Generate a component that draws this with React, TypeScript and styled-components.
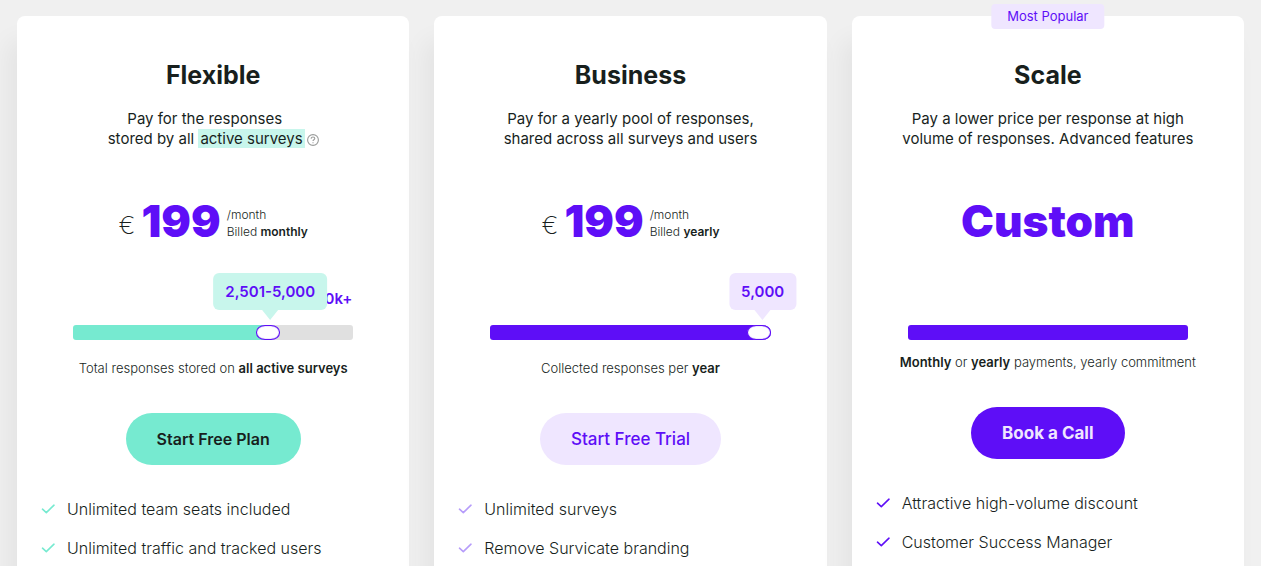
import React, { useId, useState } from "react";
import styled, { createGlobalStyle } from "styled-components";

const purple = "#5e0ef7";
const lilac = "#efe6ff";
const mint = "#76ead0";
const paleMint = "#c8f6ec";
const ink = "#181f1d";

const GlobalStyle = createGlobalStyle`
  *, *::before, *::after { box-sizing: border-box; }
  html { scrollbar-width: none; }
  body {
    margin: 0;
    background: #f0f0f0;
    color: ${ink};
    font-family: Inter, "Liberation Sans", sans-serif;
  }
`;

const Plans = styled.main`
  display: grid;
  grid-template-columns: repeat(3, minmax(0, 1fr));
  gap: 25px;
  padding: 16px 17px;
`;

const Card = styled.section`
  position: relative;
  display: flex;
  flex-direction: column;
  align-items: center;
  padding: 43px 24px 24px;
  border-radius: 8px;
  background: #fff;
  box-shadow: -10px 24px 24px rgba(0, 0, 0, 0.05);
`;

const Badge = styled.span`
  position: absolute;
  top: -12px;
  left: 50%;
  transform: translateX(-50%);
  padding: 0 16px;
  border-radius: 4px;
  background: ${lilac};
  color: ${purple};
  font-size: 13px;
  line-height: 25px;
  white-space: nowrap;
`;

const Title = styled.h2`
  margin: 0;
  font-size: 25px;
  font-weight: 700;
  line-height: 32px;
`;

const Description = styled.p`
  margin: 18px 0 0;
  font-size: 15px;
  line-height: 20px;
  text-align: center;
`;

const Highlight = styled.span`
  padding: 0 2px;
  background: ${paleMint};
`;

const HelpButton = styled.button`
  display: inline-flex;
  margin: 0 0 0 2px;
  padding: 0;
  border: 0;
  background: none;
  color: #9a9c9b;
  vertical-align: -2px;
`;

const Price = styled.div`
  display: flex;
  align-items: center;
  height: 56px;
  margin-top: 44px;
`;

const Currency = styled.span`
  margin-right: 6px;
  padding-top: 8px;
  font-size: 25px;
  font-weight: 200;
  line-height: 32px;
`;

const Amount = styled.span`
  color: ${purple};
  font-size: 44px;
  font-weight: 900;
  line-height: 56px;
`;

const Billing = styled.span`
  margin-left: 6px;
  padding-top: 4px;
  font-size: 12px;
  font-weight: 300;
  line-height: 17px;
`;

const SliderBox = styled.div`
  position: relative;
  align-self: stretch;
  height: 15px;
  margin: 76px 32px 0;
`;

const Range = styled.input<{ $fill: string; $stop: number }>`
  display: block;
  width: 100%;
  height: 15px;
  margin: 0;
  appearance: none;
  border-radius: ${(p) => (p.$stop === 100 ? "3px 9px 9px 3px / 3px 7px 7px 3px" : "3px")};
  background: linear-gradient(to right, ${(p) => p.$fill} ${(p) => p.$stop}%, #e0e0e0 ${(p) => p.$stop}%);

  &::-webkit-slider-thumb {
    appearance: none;
    width: 24px;
    height: 15px;
    border: 1px solid ${purple};
    border-radius: 9px / 7px;
    background: #fff;
    box-shadow: inset 0 0 1px ${purple};
  }
`;

const FullBar = styled.div`
  height: 15px;
  border-radius: 3px;
  background: ${purple};
`;

const MaxLabel = styled.span`
  position: absolute;
  right: 1px;
  bottom: 31px;
  color: ${purple};
  font-size: 15px;
  font-weight: 600;
  line-height: 20px;
`;

const Bubble = styled.output<{ $color: string }>`
  position: absolute;
  bottom: 30px;
  transform: translateX(-50%);
  padding: 0 12px;
  border-radius: 6px;
  background: ${(p) => p.$color};
  color: ${purple};
  font-size: 15px;
  font-weight: 600;
  line-height: 37px;
  white-space: nowrap;

  &::after {
    content: "";
    position: absolute;
    top: 100%;
    left: 50%;
    margin-left: -8px;
    border: 8px solid transparent;
    border-top: 10px solid ${(p) => p.$color};
    border-bottom: 0;
  }
`;

const Note = styled.p<{ $compact: boolean }>`
  margin: ${(p) => (p.$compact ? 12 : 18)}px 0 0;
  font-size: 13px;
  font-weight: 300;
  line-height: 20px;
  text-align: center;
`;

const Strong = styled.strong`
  font-weight: 600;
`;

const Action = styled.button<{ $bg: string; $fg: string; $weight: number; $size: number }>`
  height: 52px;
  margin-top: 35px;
  padding: 0 31px;
  border: 0;
  border-radius: 26px;
  background: ${(p) => p.$bg};
  color: ${(p) => p.$fg};
  font: ${(p) => p.$weight} ${(p) => p.$size}px/24px Inter, "Liberation Sans", sans-serif;
`;

const Features = styled.ul`
  display: flex;
  flex-direction: column;
  align-self: stretch;
  gap: 15px;
  margin: 32px 0 0;
  padding: 0;
  list-style: none;
`;

const Feature = styled.li`
  display: flex;
  align-items: center;
  gap: 11px;
  font-size: 16px;
  font-weight: 300;
  line-height: 24px;
`;

function HelpIcon() {
  return (
    <svg width="12" height="12" viewBox="0 0 12 12" fill="none" stroke="currentColor" strokeWidth="1.1" aria-hidden="true">
      <circle cx="6" cy="6" r="5.4" />
      <path d="M4.2 4.7c0-1.1.8-1.7 1.8-1.7s1.8.6 1.8 1.6c0 1.2-1.8 1.2-1.8 2.5M6 8.2v1.1" />
    </svg>
  );
}

function CheckIcon({ color }: { color: string }) {
  return (
    <svg width="15" height="12" viewBox="0 0 15 12" fill="none" stroke={color} strokeWidth="1.6" aria-hidden="true">
      <path d="M1.5 6.2 5.3 9.6 13 2.2" strokeLinecap="round" strokeLinejoin="round" />
    </svg>
  );
}

interface SliderProps {
  label: string;
  fill: string;
  bubble: string;
  steps: string[];
  initial: number;
  maxLabel?: string;
}

function ResponseSlider({ label, fill, bubble, steps, initial, maxLabel }: SliderProps) {
  const id = useId();
  const [value, setValue] = useState(initial);
  const percent = (value / (steps.length - 1)) * 100;
  return (
    <SliderBox>
      <Range
        id={id}
        type="range"
        aria-label={label}
        min={0}
        max={steps.length - 1}
        value={value}
        $fill={fill}
        $stop={percent === 100 ? 100 : percent - 2}
        onChange={(e) => setValue(Number(e.target.value))}
      />
      {maxLabel && <MaxLabel>{maxLabel}</MaxLabel>}
      <Bubble
        htmlFor={id}
        $color={bubble}
        style={{ left: `calc(${percent}% + ${Math.round(9 - percent * 0.17)}px)` }}
      >
        {steps[value]}
      </Bubble>
    </SliderBox>
  );
}

interface PlanProps {
  name: string;
  badge?: string;
  description: React.ReactNode;
  price: React.ReactNode;
  slider: React.ReactNode;
  note: React.ReactNode;
  compact?: boolean;
  action: { text: string; bg: string; fg: string; weight: number; size: number };
  checkColor: string;
  features: string[];
}

function Plan({ name, badge, description, price, slider, note, compact = false, action, checkColor, features }: PlanProps) {
  return (
    <Card>
      {badge && <Badge>{badge}</Badge>}
      <Title>{name}</Title>
      <Description>{description}</Description>
      <Price>{price}</Price>
      {slider}
      <Note $compact={compact}>{note}</Note>
      <Action type="button" $bg={action.bg} $fg={action.fg} $weight={action.weight} $size={action.size}>
        {action.text}
      </Action>
      <Features>
        {features.map((text) => (
          <Feature key={text}>
            <CheckIcon color={checkColor} />
            {text}
          </Feature>
        ))}
      </Features>
    </Card>
  );
}

function MonthlyPrice({ period }: { period: string }) {
  return (
    <>
      <Currency>€</Currency>
      <Amount>199</Amount>
      <Billing>
        /month
        <br />
        Billed <Strong>{period}</Strong>
      </Billing>
    </>
  );
}

export default function App() {
  return (
    <>
      <GlobalStyle />
      <Plans>
        <Plan
          name="Flexible"
          description={
            <>
              Pay for the responses &nbsp;&nbsp;&nbsp;
              <br />
              stored by all <Highlight>active surveys</Highlight>
              <HelpButton type="button" aria-label="About active surveys">
                <HelpIcon />
              </HelpButton>
            </>
          }
          price={<MonthlyPrice period="monthly" />}
          slider={
            <ResponseSlider
              label="Stored responses"
              fill={mint}
              bubble={paleMint}
              steps={["0-100", "101-250", "251-500", "501-1,000", "1,001-2,500", "2,501-5,000", "5,001-10,000", "10k+"]}
              initial={5}
              maxLabel="10k+"
            />
          }
          note={
            <>
              Total responses stored on <Strong>all active surveys</Strong>
            </>
          }
          action={{ text: "Start Free Plan", bg: mint, fg: ink, weight: 600, size: 16 }}
          checkColor={mint}
          features={["Unlimited team seats included", "Unlimited traffic and tracked users"]}
        />
        <Plan
          name="Business"
          description={
            <>
              Pay for a yearly pool of responses,
              <br />
              shared across all surveys and users
            </>
          }
          price={<MonthlyPrice period="yearly" />}
          slider={
            <ResponseSlider
              label="Collected responses"
              fill={purple}
              bubble={lilac}
              steps={["1,000", "2,500", "5,000"]}
              initial={2}
            />
          }
          note={
            <>
              Collected responses per <Strong>year</Strong>
            </>
          }
          action={{ text: "Start Free Trial", bg: lilac, fg: purple, weight: 500, size: 17 }}
          checkColor="#b69cfa"
          features={["Unlimited surveys", "Remove Survicate branding"]}
        />
        <Plan
          name="Scale"
          badge="Most Popular"
          description={
            <>
              Pay a lower price per response at high
              <br />
              volume of responses. Advanced features
            </>
          }
          price={<Amount>Custom</Amount>}
          slider={
            <SliderBox>
              <FullBar />
            </SliderBox>
          }
          note={
            <>
              <Strong>Monthly</Strong> or <Strong>yearly</Strong> payments, yearly commitment
            </>
          }
          compact
          action={{ text: "Book a Call", bg: purple, fg: lilac, weight: 700, size: 17 }}
          checkColor={purple}
          features={["Attractive high-volume discount", "Customer Success Manager"]}
        />
      </Plans>
    </>
  );
}
